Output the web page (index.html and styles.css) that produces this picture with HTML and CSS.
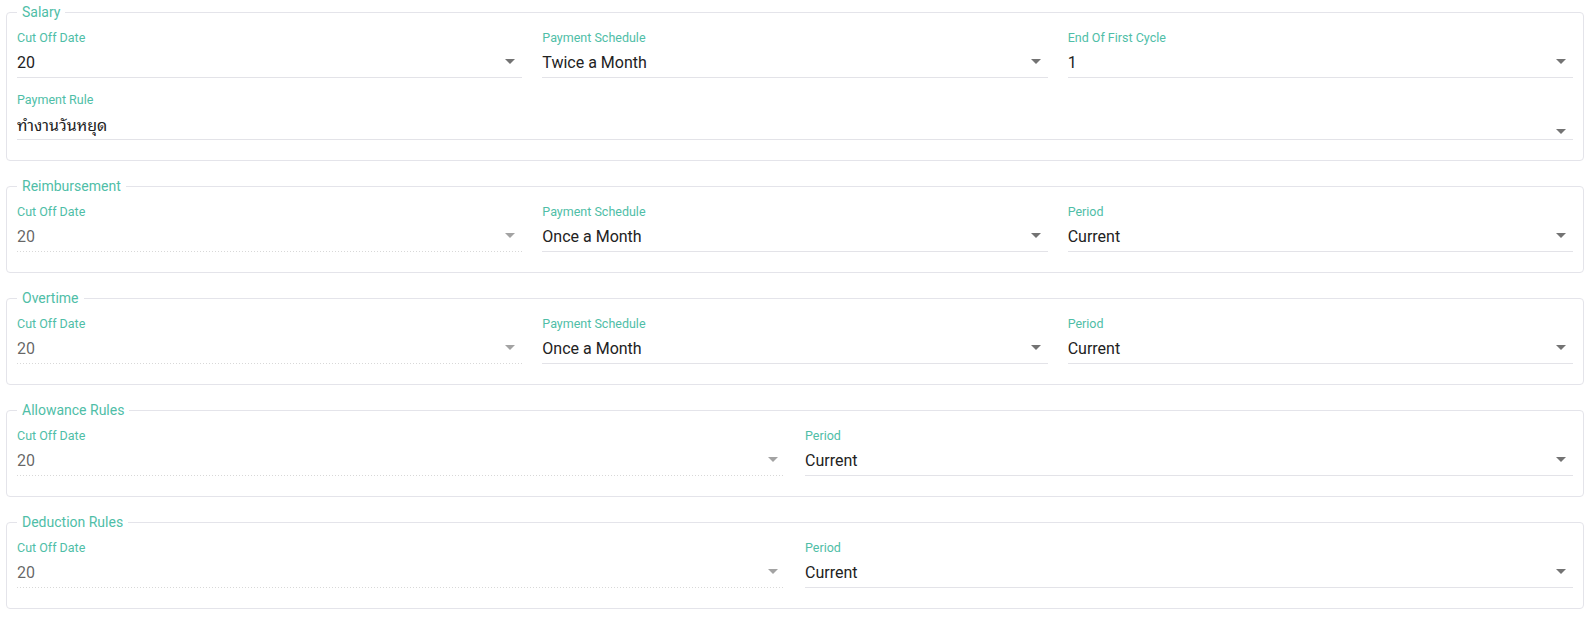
FILE: index.html
```html
<!DOCTYPE html>
<html lang="en">
<head>
<meta charset="utf-8">
<title>Payroll Settings</title>
<link rel="stylesheet" href="styles.css">
</head>
<body>
<main class="page">

  <fieldset class="group">
    <legend class="group-title">Salary</legend>
    <div class="row row-3">
      <div class="field">
        <label class="field-label">Cut Off Date</label>
        <div class="slot"><span class="value">20</span><span class="arrow"></span></div>
      </div>
      <div class="field">
        <label class="field-label">Payment Schedule</label>
        <div class="slot"><span class="value">Twice a Month</span><span class="arrow"></span></div>
      </div>
      <div class="field">
        <label class="field-label">End Of First Cycle</label>
        <div class="slot"><span class="value">1</span><span class="arrow"></span></div>
      </div>
    </div>
    <div class="row row-1">
      <div class="field">
        <label class="field-label">Payment Rule</label>
        <div class="slot"><span class="value value-thai">ทำงานวันหยุด</span><span class="arrow arrow-low"></span></div>
      </div>
    </div>
  </fieldset>

  <fieldset class="group">
    <legend class="group-title">Reimbursement</legend>
    <div class="row row-3">
      <div class="field is-disabled">
        <label class="field-label">Cut Off Date</label>
        <div class="slot"><span class="value">20</span><span class="arrow"></span></div>
      </div>
      <div class="field">
        <label class="field-label">Payment Schedule</label>
        <div class="slot"><span class="value">Once a Month</span><span class="arrow"></span></div>
      </div>
      <div class="field">
        <label class="field-label">Period</label>
        <div class="slot"><span class="value">Current</span><span class="arrow"></span></div>
      </div>
    </div>
  </fieldset>

  <fieldset class="group">
    <legend class="group-title">Overtime</legend>
    <div class="row row-3">
      <div class="field is-disabled">
        <label class="field-label">Cut Off Date</label>
        <div class="slot"><span class="value">20</span><span class="arrow"></span></div>
      </div>
      <div class="field">
        <label class="field-label">Payment Schedule</label>
        <div class="slot"><span class="value">Once a Month</span><span class="arrow"></span></div>
      </div>
      <div class="field">
        <label class="field-label">Period</label>
        <div class="slot"><span class="value">Current</span><span class="arrow"></span></div>
      </div>
    </div>
  </fieldset>

  <fieldset class="group">
    <legend class="group-title">Allowance Rules</legend>
    <div class="row row-2">
      <div class="field is-disabled">
        <label class="field-label">Cut Off Date</label>
        <div class="slot"><span class="value">20</span><span class="arrow"></span></div>
      </div>
      <div class="field">
        <label class="field-label">Period</label>
        <div class="slot"><span class="value">Current</span><span class="arrow"></span></div>
      </div>
    </div>
  </fieldset>

  <fieldset class="group">
    <legend class="group-title">Deduction Rules</legend>
    <div class="row row-2">
      <div class="field is-disabled">
        <label class="field-label">Cut Off Date</label>
        <div class="slot"><span class="value">20</span><span class="arrow"></span></div>
      </div>
      <div class="field">
        <label class="field-label">Period</label>
        <div class="slot"><span class="value">Current</span><span class="arrow"></span></div>
      </div>
    </div>
  </fieldset>

</main>
</body>
</html>
```

FILE: styles.css
```css
* {
  box-sizing: border-box;
}

html, body {
  margin: 0;
  background: #ffffff;
}

body {
  font-family: Roboto, "Noto Sans", "DejaVu Sans", sans-serif;
  color: rgba(0, 0, 0, 0.87);
}

.page {
  display: flex;
  flex-direction: column;
  gap: 15px;
  padding: 2px 9px 0 6px;
}

.group {
  margin: 0;
  min-width: 0;
  border: 1px solid #e4e4ea;
  border-radius: 4px;
  padding: 7px 10px 20px 10px;
}

.group-title {
  padding: 0 5px;
  margin: 0;
  font-size: 14px;
  line-height: 21px;
  height: 21px;
  color: #4fbea7;
}

.row {
  display: grid;
  column-gap: 20px;
}

.row + .row {
  margin-top: 14px;
}

.row-3 {
  grid-template-columns: repeat(3, minmax(0, 1fr));
}

.row-2 {
  grid-template-columns: repeat(2, minmax(0, 1fr));
}

.row-1 {
  grid-template-columns: minmax(0, 1fr);
}

.field {
  display: flex;
  flex-direction: column;
  min-width: 0;
}

.field-label {
  font-size: 12.5px;
  line-height: 16px;
  height: 16px;
  color: #4fbea7;
  white-space: nowrap;
}

.slot {
  display: flex;
  align-items: center;
  height: 32px;
  padding: 5px 0 2px 0;
  border-bottom: 1px solid #e3e3e8;
}

.value {
  flex: 1;
  font-size: 16px;
  line-height: 24px;
  color: #222222;
  white-space: nowrap;
  overflow: hidden;
}

.value-thai {
  font-family: "Noto Sans Thai Looped", "Noto Sans Thai", Tahoma, "Noto Sans", sans-serif;
  position: relative;
  top: -1px;
}

.arrow {
  flex: 0 0 24px;
  width: 24px;
  height: 24px;
  display: flex;
  align-items: center;
  justify-content: center;
}

.arrow::before {
  content: "";
  width: 0;
  height: 0;
  border-left: 5px solid transparent;
  border-right: 5px solid transparent;
  border-top: 5px solid #737373;
  margin-top: -3px;
}

.arrow-low::before {
  margin-top: 12px;
}

.is-disabled .value {
  color: rgba(0, 0, 0, 0.62);
}

.is-disabled .arrow::before {
  border-top-color: #a3a3a3;
}

.is-disabled .slot {
  border-bottom: 1px solid transparent;
  background-image: linear-gradient(to right, #d8d8d8 0, #d8d8d8 1px, transparent 1px);
  background-size: 3px 1px;
  background-repeat: repeat-x;
  background-position: left bottom;
  background-origin: border-box;
}
```
